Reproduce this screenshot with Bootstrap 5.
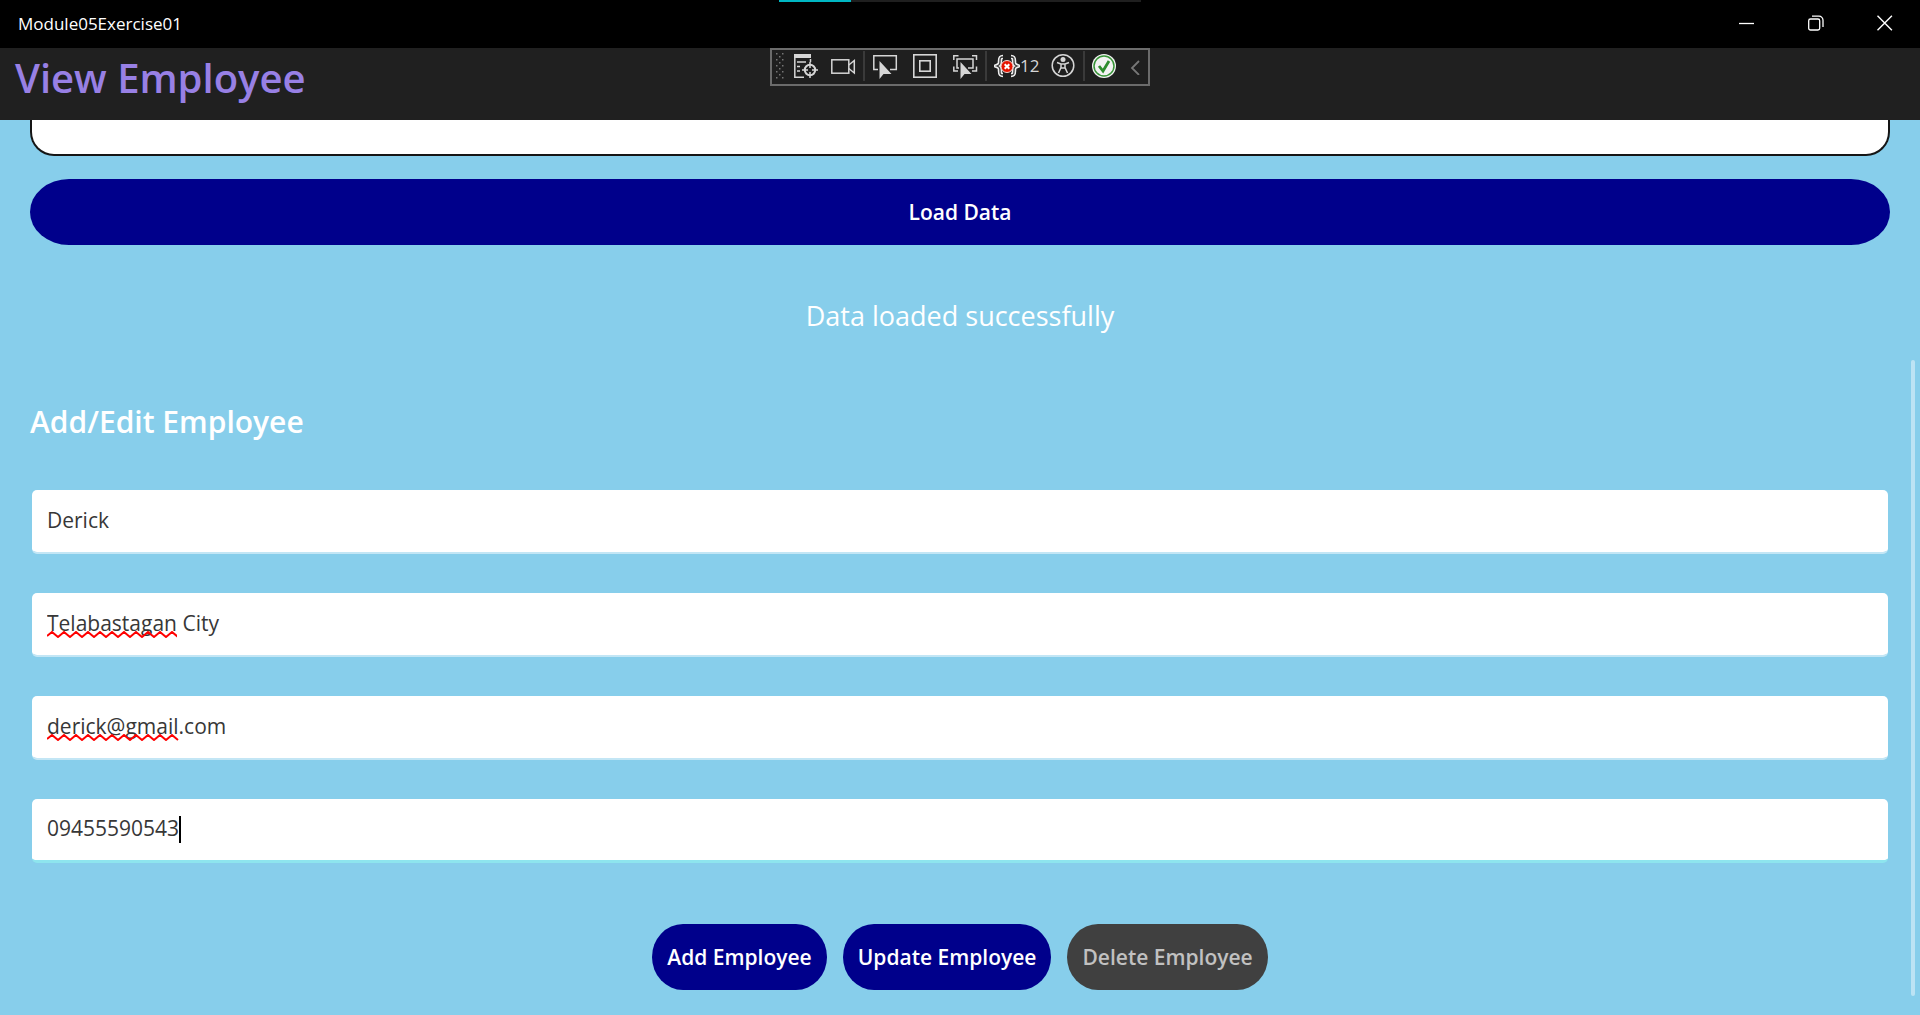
<!DOCTYPE html>
<html lang="en" data-bs-theme="light">
<head>
<meta charset="utf-8">
<meta name="viewport" content="width=device-width, initial-scale=1">
<title>Module05Exercise01</title>
<link href="https://cdn.jsdelivr.net/npm/bootstrap@5.3.0/dist/css/bootstrap.min.css" rel="stylesheet">
<style>
  body { font-family: "Open Sans", "Noto Sans", sans-serif; background: #87ceeb; }
  .title-bar { height: 48px; background: #000; font-size: 17px; padding-left: 18px; }
  .caption-btn { width: 69px; height: 46px; }
  .page-header { height: 72px; background: #202020; padding-left: 15px; }
  .page-header h1 { font-size: 40px; line-height: 60px; font-weight: 600; color: #9880e5; }
  .load-strip { width: 362px; height: 2px; background: #1f1f1f; }
  .load-strip div { width: 72px; height: 2px; background: #00b7c3; }
  .debug-bar { top: 48px; width: 380px; height: 38px; border: 2px solid #6b6b6b; background: #1f1f1f; padding-bottom: 2px; }
  .debug-bar svg, .title-bar svg { display: block; flex-shrink: 0; }
  .tool { width: 40px; height: 32px; color: #d6d6d6; font-size: 17px; line-height: 24px; }
  .tool-sm { width: 38px; }
  .tool-wide { width: 56px; padding-left: 7px; }
  .tool-end { width: 24px; }
  .rule { width: 2px; height: 30px; background: #3a3a3a; }
  .content-area { padding: 0 30px 25px; }
  .list-frame { height: 36px; background: #fff; border: 2px solid #151515; border-top: 0; border-radius: 0 0 24px 24px; margin-bottom: 23px; }
  .pill { height: 66px; border: 0; border-radius: 39px / 33px; background: #00008b; color: #fff; font-size: 21px; font-weight: 600; line-height: 28px; padding: 0 15px; }
  .pill-sm { border-radius: 31px / 33px; }
  .pill:hover { background: #0000a0; color: #fff; }
  .pill:disabled { background: #404040; color: #c1c1c1; opacity: 1; }
  .status { font-size: 27px; line-height: 36px; margin: 53px 0 68px; }
  .form-title { font-size: 30px; line-height: 40px; font-weight: 600; margin: 0 0 48px; }
  .entry-list { gap: 39px; padding: 0 2px; margin-bottom: 61px; }
  .entry { height: 64px; border: 0; border-bottom: 2px solid #c3e6f5; border-radius: 5px; background: #fff; background-clip: padding-box; color: #373737; font-size: 21px; line-height: 30px; padding: 14px 15px 17px; }
  .entry:focus { color: #373737; box-shadow: none; }
  .entry-active { border-bottom: 3px solid #8ee5ee; }
  .squiggle { left: 15px; top: 38px; }
  .caret { left: 147px; top: 17px; width: 2px; height: 27px; background: #000; }
  .scroll-thumb { right: 5px; top: 360px; bottom: 19px; width: 4px; background: #bce3f4; }
</style>
<script src="https://cdn.jsdelivr.net/npm/bootstrap@5.3.0/dist/js/bootstrap.bundle.min.js"></script>
</head>
<body>
<div class="position-relative min-vh-100">
  <header>
    <div class="title-bar d-flex align-items-start justify-content-between text-white">
      <span class="align-self-center">Module05Exercise01</span>
      <div class="d-flex">
        <button type="button" class="caption-btn btn p-0 border-0 rounded-0 text-white d-flex align-items-center justify-content-center" aria-label="Minimize">
          <svg width="18" height="16" viewBox="0 0 18 16"><path d="M0 8.500H15" stroke="currentColor" stroke-width="1.300"/></svg></button>
        <button type="button" class="caption-btn btn p-0 border-0 rounded-0 text-white d-flex align-items-center justify-content-center" aria-label="Restore">
          <svg width="18" height="16" viewBox="0 0 18 16" fill="none" stroke="currentColor" stroke-width="1.300"><rect x=".7" y="4" width="11" height="11" rx="1.800"/><path d="M4 1.200h7a4 4 0 0 1 4 4V12"/></svg></button>
        <button type="button" class="caption-btn btn p-0 border-0 rounded-0 text-white d-flex align-items-center justify-content-center" aria-label="Close">
          <svg width="18" height="16" viewBox="0 0 18 16"><path d="M.5.800l14.400 14.400M14.900.800L.5 15.200" stroke="currentColor" stroke-width="1.400"/></svg></button>
      </div>
    </div>
    <div class="page-header"><h1 class="m-0">View Employee</h1></div>
  </header>

  <div class="load-strip position-absolute top-0 start-50 translate-middle-x"><div></div></div>

  <div class="debug-bar position-absolute start-50 translate-middle-x d-flex align-items-center" role="toolbar" aria-label="Debug tools">
    <svg width="15" height="32" viewBox="0 1 15 32" fill="#757575">
      <path d="M4 4h1.500v1.500H4zM10 4h1.500v1.500H10zM7 7h1.500v1.500H7zM4 10h1.500v1.500H4zM10 10h1.500v1.500H10zM7 13h1.500v1.500H7zM4 16h1.500v1.500H4zM10 16h1.500v1.500H10zM7 19h1.500v1.500H7zM4 22h1.500v1.500H4zM10 22h1.500v1.500H10zM7 25h1.500v1.500H7zM4 28h1.500v1.500H4zM10 28h1.500v1.500H10z"/></svg>
    <button type="button" class="tool tool-sm btn p-0 border-0 d-flex align-items-center justify-content-center" aria-label="Live visual tree">
      <svg width="26" height="26" viewBox="0 0 26 26" fill="none" stroke="currentColor" stroke-width="1.500"><path d="M1 1h17v4H1z" fill="currentColor" stroke="none"/><path d="M1.800 3v21.200H11M4 9h9M4 13.500h3M4 18h3M17.500 6v3"/><circle cx="17" cy="17" r="5.200" stroke-width="2"/><path d="M17 9v6M17 19v6M9 17h6M19 17h6"/></svg></button>
    <button type="button" class="tool tool-sm btn p-0 border-0 d-flex align-items-center justify-content-center" aria-label="Record">
      <svg width="26" height="26" viewBox="2 1 26 26" fill="none" stroke="currentColor" stroke-width="1.500"><rect x="2.800" y="7.800" width="17" height="13.400"/><path d="M19.800 13L25.300 8.500v12.500L19.800 16.500"/></svg></button>
    <span class="rule"></span>
    <button type="button" class="tool btn p-0 border-0 d-flex align-items-center justify-content-center" aria-label="Select element">
      <svg width="26" height="26" viewBox="0 0 26 26" fill="none" stroke="currentColor" stroke-width="1.500"><path d="M6 16.500H1.800V2.800h22.500v13.700H18"/><path d="M7.500 8v18l4-5h8z" fill="currentColor" stroke="none"/></svg></button>
    <button type="button" class="tool btn p-0 border-0 d-flex align-items-center justify-content-center" aria-label="Display layout adorners">
      <svg width="26" height="26" viewBox="0 0 26 26" fill="none" stroke="currentColor" stroke-width="1.600"><rect x="1.800" y="1.800" width="22.400" height="22.400"/><rect x="7.800" y="7.800" width="10.400" height="10.400"/></svg></button>
    <button type="button" class="tool btn p-0 border-0 d-flex align-items-center justify-content-center" aria-label="Track focused element">
      <svg width="26" height="26" viewBox="0 0 26 26" fill="none" stroke="currentColor" stroke-width="1.500"><path d="M1.800 7V2.800H6.500M20 2.800h4.500V7M24.500 13.500v4.500H20M1.800 13.500v4.500H6"/><path d="M7 15H5V6h16v9h-5"/><path d="M8.500 9v17l4-5h7z" fill="currentColor" stroke="none"/></svg></button>
    <span class="rule"></span>
    <button type="button" class="tool tool-wide btn py-0 pe-0 border-0 d-flex align-items-center" aria-label="12 binding failures">
      <svg width="26" height="24" viewBox="-1 0 26 24" fill="none"><path d="M8 3C5 3 5 4.500 5 7s0 4-3 5c3 1 3 2.500 3 5s0 4 3 4M16 3c3 0 3 1.500 3 4s0 4 3 5c-3 1-3 2.500-3 5s0 4-3 4" stroke="#eee" stroke-width="4.500"/><path d="M8 3C5 3 5 4.500 5 7s0 4-3 5c3 1 3 2.500 3 5s0 4 3 4M16 3c3 0 3 1.500 3 4s0 4 3 5c-3 1-3 2.500-3 5s0 4-3 4" stroke="#333" stroke-width="1.300"/><circle cx="12" cy="12.500" r="6" fill="#e51400" stroke="#f4d9d6"/><path d="M9.700 10.200l4.600 4.600M14.300 10.200l-4.600 4.600" stroke="#fff" stroke-width="2"/></svg><span>12</span></button>
    <button type="button" class="tool btn p-0 border-0 d-flex align-items-center justify-content-center" aria-label="Scan for accessibility issues">
      <svg width="26" height="26" viewBox="0 0 26 26" fill="none" stroke="currentColor" stroke-width="1.500"><circle cx="13" cy="12.500" r="10.800"/><circle cx="13" cy="6.500" r="2.500" fill="currentColor" stroke="none"/><path d="M7 9.500l4 1.500v3.500L8.500 20M19 9.500L15 11v3.500l2.500 5.500M11 11h4M11 15h4"/></svg></button>
    <span class="rule"></span>
    <button type="button" class="tool tool-sm btn p-0 border-0 d-flex align-items-center justify-content-center" aria-label="Hot reload">
      <svg width="26" height="26" viewBox="0 0 26 26" fill="none"><circle cx="13" cy="13" r="12" fill="#f3f3f3"/><circle cx="13" cy="13" r="10" stroke="#389438" stroke-width="1.500"/><path d="M8 13l4 5 6-10" stroke="#2d8c2d" stroke-width="2.800"/></svg></button>
    <button type="button" class="tool tool-end btn p-0 border-0 d-flex align-items-center justify-content-center" aria-label="Collapse toolbar">
      <svg width="12" height="18" viewBox="0 0 12 18" fill="none"><path d="M10 4L3 11l7 7" stroke="#777" stroke-width="1.800"/></svg></button>
  </div>

  <main class="content-area">
    <div class="list-frame"></div>
    <button type="button" class="pill btn w-100 d-block">Load Data</button>
    <p class="status text-center text-white">Data loaded successfully</p>

    <form>
      <h2 class="form-title text-white">Add/Edit Employee</h2>
      <div class="entry-list d-flex flex-column">
        <input class="entry form-control" type="text" aria-label="Name" value="Derick">
        <div class="position-relative">
          <input class="entry form-control" type="text" aria-label="Address" value="Telabastagan City">
          <svg class="squiggle position-absolute" width="130" height="7" viewBox="0 0 130 7" fill="none" stroke="#f00" stroke-width="2"><path d="M0 5l5-4 6 5 6-5 6 5 6-5 6 5 6-5 6 5 6-5 6 5 6-5 6 5 6-5 6 5 6-5 6 5 6-5 6 5 6-5 6 5 6-5 6 5"/></svg>
        </div>
        <div class="position-relative">
          <input class="entry form-control" type="text" aria-label="Email" value="derick@gmail.com">
          <svg class="squiggle position-absolute" width="132" height="7" viewBox="0 0 132 7" fill="none" stroke="#f00" stroke-width="2"><path d="M0 5l5-4 6 5 6-5 6 5 6-5 6 5 6-5 6 5 6-5 6 5 6-5 6 5 6-5 6 5 6-5 6 5 6-5 6 5 6-5 6 5 6-5 6 5"/></svg>
        </div>
        <div class="position-relative">
          <input class="entry entry-active form-control" type="text" aria-label="Contact number" value="09455590543">
          <div class="caret position-absolute"></div>
        </div>
      </div>
      <div class="d-flex justify-content-center gap-3">
        <button type="button" class="pill pill-sm btn">Add Employee</button>
        <button type="button" class="pill pill-sm btn">Update Employee</button>
        <button type="button" class="pill pill-sm btn" disabled>Delete Employee</button>
      </div>
    </form>
  </main>

  <div class="scroll-thumb position-absolute rounded-pill"></div>
</div>
</body>
</html>
